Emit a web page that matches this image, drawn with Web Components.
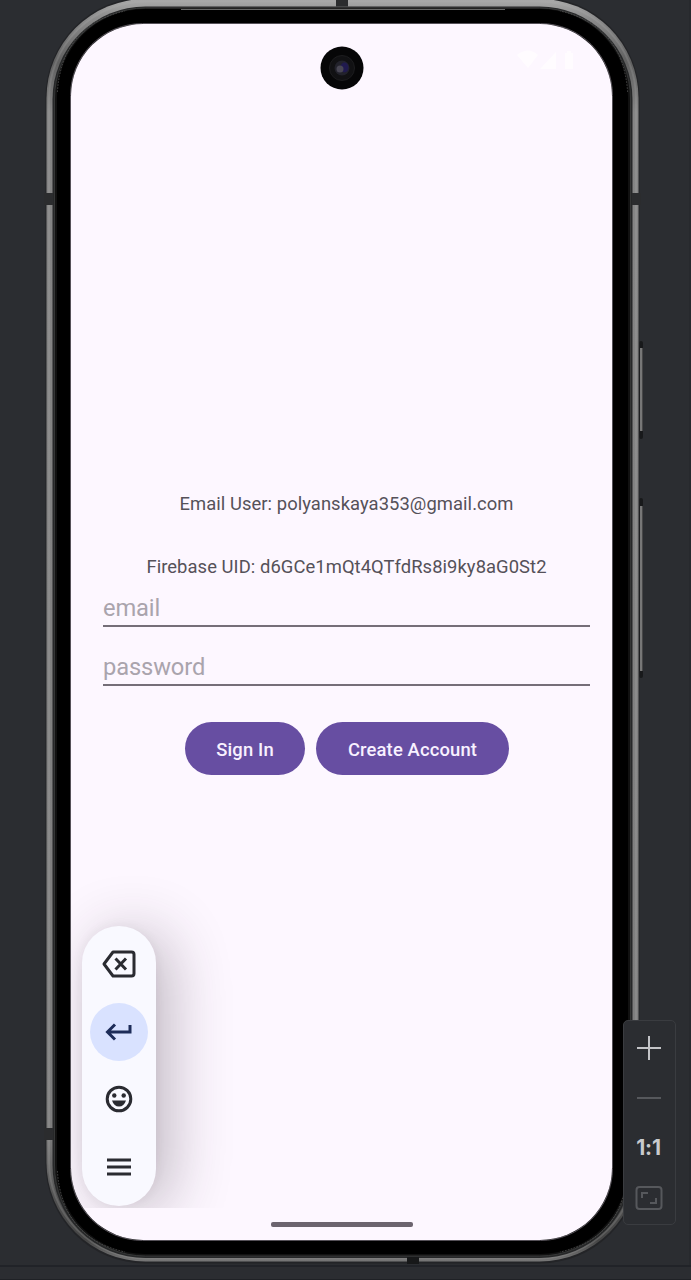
<!DOCTYPE html>
<html lang="en"><head><meta charset="utf-8"><title>Emulator</title>
<style>html,body{margin:0;background:#2b2d31;overflow:hidden}body{font-family:Roboto,sans-serif}</style></head>
<body>
<emulator-window>
 <phone-frame>
  <auth-form>
   <info-line style="--ls:.06px">Email User: polyanskaya353@gmail.com</info-line>
   <info-line style="--ls:.07px">Firebase UID: d6GCe1mQt4QTfdRs8i9ky8aG0St2</info-line>
   <text-field>email</text-field>
   <text-field>password</text-field>
   <pill-button slot="actions" style="width:120px">Sign In</pill-button>
   <pill-button slot="actions" style="width:193px">Create Account</pill-button>
  </auth-form>
  <key-strip slot="overlay"></key-strip>
 </phone-frame>
 <zoom-panel slot="tools"></zoom-panel>
</emulator-window>
<script>
const define=(name,html)=>customElements.define(name,class extends HTMLElement{
 constructor(){super();const t=document.createElement('template');t.innerHTML=html;
 this.attachShadow({mode:'open'}).append(t.content.cloneNode(true));}});

define('emulator-window',`<style>
:host{display:block;position:relative;width:691px;height:1280px;box-sizing:border-box;padding-left:46px;background:#2b2d31;overflow:hidden}
.base{position:absolute;left:0;right:0;top:1265px;height:12px;border-top:2px solid #212328;border-bottom:2px solid #1f2125;background:#2b2d31}
.tools{position:absolute;left:623px;top:1020px}
.edge{position:absolute;right:0;top:0;width:2px;height:1265px;background:#27292d}
</style><div class="base"></div><div class="edge"></div><slot></slot><div class="tools"><slot name="tools"></slot></div>`);

define('phone-frame',`<style>
:host{display:block;position:relative;width:593px;height:1264px;margin-top:-2px}
.hardware{position:absolute;left:-46px;top:2px;width:691px;height:1280px}
.screen{position:relative;margin:0 0 0 25px;top:26px;width:541px;height:1216px;border-radius:72px;background:#fdf7ff;overflow:hidden;display:flex;flex-direction:column}
.camera{position:absolute;left:249px;top:22px}
.status{position:absolute;left:445px;top:25px}
.home{position:absolute;left:200px;top:1198px;width:142px;height:5px;border-radius:2px;background:#6c646f}
</style>
<svg class="hardware" viewBox="0 0 691 1280">
<defs><linearGradient id="m" x1="0" y1="0" x2="0" y2="1"><stop offset="0" stop-color="#aaa"/><stop offset=".015" stop-color="#8c8c8c"/><stop offset=".05" stop-color="#606060"/><stop offset=".09" stop-color="#858585"/><stop offset=".9" stop-color="#7d7d7d"/><stop offset=".95" stop-color="#505050"/><stop offset=".983" stop-color="#444"/><stop offset="1" stop-color="#777"/></linearGradient></defs>
<g fill="#18191b"><rect x="639" y="341" width="4" height="98" rx="2"/><rect x="639" y="498" width="4" height="180" rx="2"/></g>
<g fill="#777"><rect x="640" y="348" width="2.5" height="83"/><rect x="640" y="506" width="2.5" height="165"/></g>
<rect x="45.5" y="-2.5" width="594" height="1266" rx="100" fill="#232427"/>
<rect x="46.5" y="-1" width="592" height="1262.5" rx="99" fill="url(#m)"/>
<rect x="49" y="1.5" width="587" height="1257" rx="97" fill="none" stroke="#b0b0b0" stroke-opacity=".22" stroke-width="2"/>
<rect x="52.5" y="6.5" width="580" height="1251.5" rx="93" fill="#262728"/>
<rect x="54.5" y="8" width="576" height="1248" rx="91" fill="#111" stroke="#3c3d3e" stroke-width=".8"/>
<rect x="57" y="9" width="571" height="1245" rx="88" fill="#000"/>
<path d="M181 9.500h324" stroke="#686868" stroke-width="1.2"/>
<path d="M57.400 92Q62 25 125 11M627.600 92Q623 25 560 11M57.400 1171Q62 1238 125 1252M627.600 1171Q623 1238 560 1252" fill="none" stroke="#555" stroke-width=".8" stroke-dasharray="1.5 1.5"/>
<g fill="#2b2c2e"><rect x="336" y="0" width="12" height="6.5"/><rect x="44" y="193" width="9" height="12"/><rect x="632" y="193" width="9" height="12"/><rect x="44" y="1128" width="9" height="12"/><rect x="407" y="1257" width="12" height="7" fill="#171819"/></g>
<rect x="70.5" y="23.5" width="542" height="1217" rx="72" fill="none" stroke="#555158" stroke-width="1"/>
</svg>
<div class="screen"><slot></slot><slot name="overlay"></slot>
<svg class="camera" width="44" height="44" viewBox="0 0 44 44"><circle cx="22" cy="22" r="21.5" fill="#060607"/><circle cx="22" cy="22" r="12.5" fill="#111113" stroke="#1c1c1e"/><circle cx="22" cy="22" r="7.5" fill="#22222b"/><ellipse cx="24.5" cy="21.5" rx="4" ry="5" fill="#201a4e"/><circle cx="20" cy="23" r="3.5" fill="#484653"/></svg>
<svg class="status" width="62" height="24" viewBox="0 0 62 24" fill="#fffcff"><path d="M1 6Q12 -3 22 6L12 19ZM24 20 40 3V20ZM49 4H51V2H55V4H57V20H49Z"/></svg>
<div class="home"></div></div>`);

define('auth-form',`<style>
:host{display:flex;flex-direction:column;padding:463px 22px 0 32px}
.actions{display:flex;gap:11px;margin:36px 0 0 82px}
</style><slot></slot><div class="actions"><slot name="actions"></slot></div>`);

define('info-line',`<style>
:host{display:block;height:34px;margin-bottom:28.5px;padding-right:0;line-height:34px;text-align:center;font-size:18.4px;letter-spacing:var(--ls);color:#555159;white-space:nowrap}
:host(:nth-of-type(2)){margin-bottom:0}
</style><slot></slot>`);

define('text-field',`<style>
:host{display:block;box-sizing:border-box;height:59px;padding-top:26px;border-bottom:2px solid #756e78;line-height:28px;font-size:23.7px;letter-spacing:-.12px;color:#aaa4ad}
:host(:first-of-type){height:43.5px;padding-top:10px}
</style><slot></slot>`);

define('pill-button',`<style>
:host{display:block;box-sizing:border-box;height:53px;border-radius:27px;background:#674ea2;color:#f8f1ff;font-size:18.4px;font-weight:500;letter-spacing:.15px;line-height:56px;text-align:center;white-space:nowrap}
</style><slot></slot>`);

define('key-strip',`<style>
:host{position:absolute;left:0;top:840px;width:240px;height:344px;overflow:hidden}
.pill{box-sizing:border-box;width:74px;height:280px;margin:62px 0 0 11px;padding:9px 0 10px;border-radius:37px;background:#f9f9ff;box-shadow:14px 6px 60px rgba(50,35,50,.3),0 0 12px rgba(50,35,50,.06);display:flex;flex-direction:column;align-items:center;justify-content:space-between}
.key{width:58px;height:58px;display:grid;place-items:center;border-radius:50%}
.key.on{background:#d9e2ff}
svg{display:block;fill:none;stroke:#2a2b31;stroke-width:3}
</style>
<div class="pill">
<div class="key"><svg width="34" height="28" viewBox="0 0 34 28"><path d="M11 2H29.5Q32 2 32 4.500V23.500Q32 26 29.500 26H11L2 14Z" stroke-linejoin="round"/><path d="M13.500 8.500 24 19.500M24 8.500 13.500 19.500"/></svg></div>
<div class="key on"><svg width="28" height="18" viewBox="0 0 28 18" style="stroke:#1d2c59"><path d="M25 2V9H3M10 1.500 2.500 9 10 16.500"/></svg></div>
<div class="key"><svg width="28" height="28" viewBox="0 0 28 28"><circle cx="14" cy="14" r="11.800"/><g fill="#2a2b31" stroke="none"><circle cx="9.300" cy="10.500" r="2.200"/><circle cx="18.700" cy="10.500" r="2.200"/><path d="M7 15.500H21Q19 21.500 14 21.500T7 15.500Z"/></g></svg></div>
<div class="key"><svg width="24" height="18" viewBox="0 0 24 18"><path d="M0 2H24M0 9H24M0 16H24"/></svg></div>
</div>`);

define('zoom-panel',`<style>
:host{box-sizing:border-box;width:53px;height:205px;padding:2px 2px 0 0;border:1px solid #3a3c40;border-radius:5px;background:#2b2d31;display:flex;flex-direction:column;align-items:center}
div{width:100%;height:50px;display:grid;place-items:center}
.ratio{font:bold 21px/50px Inter,sans-serif;letter-spacing:-.2px;color:#c9cacd}
svg{display:block;fill:none}
</style>
<div><svg width="26" height="26" viewBox="0 0 26 26" stroke="#c3c4c7" stroke-width="2"><path d="M13 1V25M1 13H25"/></svg></div>
<div><svg width="26" height="4" viewBox="0 0 26 4" stroke="#56585c" stroke-width="2"><path d="M1 2H25"/></svg></div>
<div class="ratio">1:1</div>
<div><svg width="28" height="24" viewBox="0 0 28 24" stroke="#56585c" stroke-width="2"><rect x="1.500" y="1" width="25" height="22" rx="3"/><path d="M7 12V7H13M21 12V17H15"/></svg></div>`);
</script></body></html>
